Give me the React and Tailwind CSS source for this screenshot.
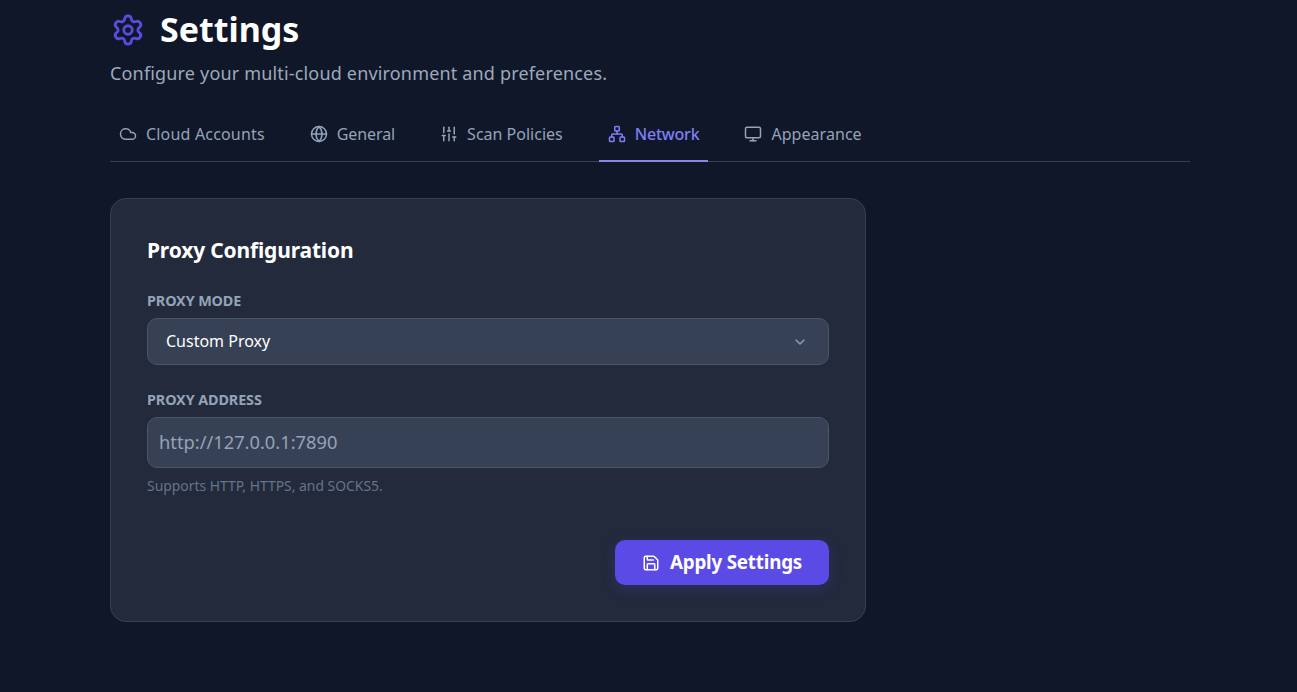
import React from "react";
import { Settings, Cloud, Globe, SlidersVertical, Network, Monitor, ChevronDown, Save } from "lucide-react";

const tabs = [
  { label: "Cloud Accounts", Icon: Cloud, track: "tracking-[0.18px]" },
  { label: "General", Icon: Globe, track: "tracking-[-0.1px]" },
  { label: "Scan Policies", Icon: SlidersVertical, track: "tracking-[0px]" },
  { label: "Network", Icon: Network, track: "tracking-[-0.2px]", active: true },
  { label: "Appearance", Icon: Monitor, track: "tracking-[0.05px]" },
];

export default function App() {
  return (
    <div className="h-[692px] overflow-hidden bg-[#101729] text-white font-['Noto_Sans','Open_Sans',sans-serif]">
      <div className="ml-[110px] w-[1080px]">
        <div className="flex h-[59px] items-center gap-[15px] pl-[1px] pt-[1px]">
          <Settings size={34} strokeWidth={2} className="text-[#5b4ae0]" />
          <h1 className="pb-[2px] text-[34px] font-bold leading-none">Settings</h1>
        </div>
        <p className="mt-[1px] text-[18px] leading-[26px] text-[#9ca9bd] tracking-[0.17px]">
          Configure your multi-cloud environment and preferences.
        </p>
        <div className="mt-[24px] flex h-[52px] gap-[27px] border-b border-[#3a4252]">
          {tabs.map(({ label, Icon, track, active }) => (
            <div key={label} className={`flex h-[52px] items-center gap-[9px] border-b-2 px-[9px] pb-[3px] text-[16px] ${track} ${active ? "border-[#8b86e8] text-[#7f7ff5] font-medium" : "border-transparent text-[#94a3b8]"}`}>
              <Icon size={18} strokeWidth={2} />
              <span>{label}</span>
            </div>
          ))}
        </div>
        <div className="mt-[36px] h-[424px] w-[756px] rounded-[16px] border border-[#363e4f] bg-[#232a3c] px-[36px] pt-[35px]">
          <h2 className="text-[21px] font-bold leading-[32px] tracking-[-0.17px]">Proxy Configuration</h2>
          <label className="mt-[24px] block text-[14.4px] font-bold leading-[22px] text-[#94a3b8] tracking-[-0.12px]">PROXY MODE</label>
          <div className="mt-[6px] flex h-[47px] items-center justify-between rounded-[10px] border border-[#4b5568] bg-[#374155] pb-[2px] pl-[18px] pr-[20px] text-[16px]">
            <span>Custom Proxy</span>
            <ChevronDown size={16} className="mt-[2px] text-[#94a3b8]" />
          </div>
          <label className="mt-[24px] block text-[14.4px] font-bold leading-[22px] text-[#94a3b8] tracking-[-0.12px]">PROXY ADDRESS</label>
          <div className="mt-[6px] flex h-[51px] items-center rounded-[10px] border border-[#4b5568] bg-[#374155] pb-[2px] pl-[11px] text-[18.3px] text-[#94a3b8]">
            http://127.0.0.1:7890
          </div>
          <p className="mt-[8px] text-[13.9px] leading-[20px] text-[#64748b]">Supports HTTP, HTTPS, and SOCKS5.</p>
          <div className="mt-[44px] flex justify-end">
            <button className="flex h-[45px] w-[214px] items-center justify-center gap-[10px] rounded-[10px] bg-[#5b4ae5] text-[18.8px] font-bold tracking-[-0.2px] shadow-[0_4px_14px_rgba(79,70,229,0.22)]">
              <Save size={18} />
              <span>Apply Settings</span>
            </button>
          </div>
        </div>
      </div>
    </div>
  );
}
